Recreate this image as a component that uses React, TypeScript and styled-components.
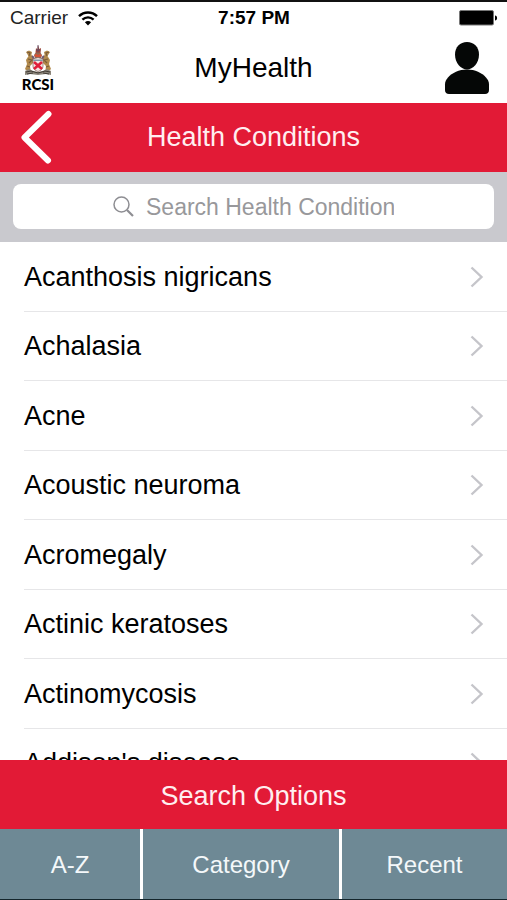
import React from "react";
import styled, { createGlobalStyle } from "styled-components";

const RED = "#e21a36";
const SLATE = "#6e8995";

const GlobalStyle = createGlobalStyle`
  *, *::before, *::after { box-sizing: border-box; }
  body {
    margin: 0;
    background: #fff;
    color: #000;
    font-family: "Liberation Sans", Arial, Helvetica, sans-serif;
  }
  button, input { font-family: inherit; }
`;

const Screen = styled.div`
  display: flex;
  flex-direction: column;
  height: 100vh;
  border-top: 2px solid #111;
  border-bottom: 1px solid #14262c;
`;

const StatusBar = styled.div`
  display: grid;
  grid-template-columns: 1fr auto 1fr;
  align-items: center;
  height: 32px;
  padding: 0 9px 0 10px;
  font-size: 19px;
  line-height: 32px;
  flex: none;
`;

const Carrier = styled.span`
  display: flex;
  align-items: center;
  gap: 10px;
  color: #222;
`;

const Clock = styled.time`
  font-weight: bold;
`;

const Battery = styled.svg`
  justify-self: end;
`;

const AppHeader = styled.header`
  display: grid;
  grid-template-columns: 1fr auto 1fr;
  align-items: center;
  height: 69px;
  padding: 0 17px 2px;
  flex: none;
`;

const AppTitle = styled.h1`
  margin: 0;
  font-size: 28px;
  font-weight: normal;
  line-height: 32px;
`;

const Logo = styled.a`
  justify-self: start;
  display: flex;
  flex-direction: column;
  align-items: center;
  width: 42px;
  color: #000;
  text-decoration: none;
`;

const LogoText = styled.span`
  font-family: Lato, sans-serif;
  font-size: 15px;
  font-weight: 900;
  line-height: 16px;
`;

const IconButton = styled.button`
  display: flex;
  padding: 0;
  border: 0;
  background: none;
  cursor: pointer;
`;

const ProfileButton = styled(IconButton)`
  justify-self: end;
`;

const RedBar = styled.div<{ $footer?: boolean }>`
  display: grid;
  grid-template-columns: 1fr auto 1fr;
  align-items: center;
  height: 69px;
  padding: ${(p) => (p.$footer ? "2px 20px 0" : "0 20px 2px")};
  background: ${RED};
  color: #fff;
  flex: none;
`;

const BarTitle = styled.h2`
  grid-column: 2;
  margin: 0;
  font-size: 27px;
  font-weight: normal;
  line-height: 32px;
  color: #ffeef0;
`;

const SearchBar = styled.form`
  padding: 12px 13px 13px;
  background: #c9c9ce;
  flex: none;
`;

const SearchField = styled.label`
  display: flex;
  align-items: center;
  justify-content: center;
  gap: 12px;
  height: 45px;
  padding: 0 12px;
  border-radius: 8px;
  background: #fff;
`;

const SearchInput = styled.input`
  flex: 0 1 248px;
  min-width: 0;
  padding: 0;
  border: 0;
  outline: 0;
  background: none;
  color: #000;
  font-size: 23px;
  line-height: 28px;
  &::placeholder {
    color: #98989b;
    opacity: 1;
  }
`;

const List = styled.ul`
  flex: 1 1 0;
  min-height: 0;
  margin: 0;
  padding: 0 0 0 24px;
  overflow-y: auto;
  scrollbar-width: none;
  list-style: none;
`;

const Row = styled.li`
  height: 70px;
  border-bottom: 1px solid #e6e6e8;
  &:nth-child(even) { height: 69px; }
`;

const RowLink = styled.a`
  display: flex;
  align-items: center;
  justify-content: space-between;
  height: 100%;
  padding-right: 23px;
  color: #000;
  font-size: 27px;
  line-height: 32px;
  text-decoration: none;
`;

const Tabs = styled.nav`
  display: grid;
  grid-template-columns: 140fr 196fr 165fr;
  gap: 3px;
  height: 70px;
  background: #fff;
  flex: none;
`;

const Tab = styled.button`
  padding: 2px 0 0;
  border: 0;
  background: ${SLATE};
  color: #f4f8fa;
  font-size: 24px;
  line-height: 28px;
  cursor: pointer;
`;

const conditions = [
  "Acanthosis nigricans",
  "Achalasia",
  "Acne",
  "Acoustic neuroma",
  "Acromegaly",
  "Actinic keratoses",
  "Actinomycosis",
  "Addison's disease",
];

const WifiIcon = () => (
  <svg width="20" height="15" viewBox="0 0 20 15" aria-hidden="true">
    <g fill="none" stroke="#000" strokeWidth="2.4">
      <path d="M1 5.2C6 .2 14 .2 19 5.2" />
      <path d="M4.4 8.6c3.2-3 8-3 11.2 0" />
    </g>
    <path d="M6.9 11.2c1.8-1.6 4.4-1.6 6.2 0L10 14.4z" />
  </svg>
);

const BatteryIcon = () => (
  <Battery width="39" height="16" viewBox="0 0 39 16" role="img" aria-label="Battery full">
    <rect x=".5" y=".5" width="34" height="14.5" rx="1.5" stroke="#777" />
    <path d="M36 5.5c2.8.3 2.8 4.7 0 5z" />
  </Battery>
);

const Crest = () => (
  <svg width="28" height="32" viewBox="0 0 28 32" aria-hidden="true">
    <path d="M10 11 12 8l4 0 2 3-1 3h-6z" fill="#8b6b58" />
    <path d="M11.5 8.5 12 4l1.5 1.5L14 1l1.3 4L17 4l-.4 4.8z" fill="#a44735" />
    <path d="M14 1.2v6.6M12 6h4.5" stroke="#5d4b67" strokeWidth="1" />
    <path d="m10 12 2-2.5 2 1.5 2-1.5 2 2.5-2 1h-4z" fill="#d65236" />
    <path d="M2 8 5 6.5 8 8l-.6 3L10 14l-1 5-3 3 .5 4H2l-1-1 2-5-1-4 2.5-4z" fill="#b28a4c" />
    <path d="m26 8-3-1.5L20 8l.6 3L18 14l1 5 3 3-.5 4H26l1-1-2-5 1-4-2.5-4z" fill="#b28a4c" />
    <path d="m3 8 3 1-1 3m20-4-3 1 1 3M4 15l4 1-3 3m19-4-4 1 3 3M3 22l3 1m19-1-3 1" fill="none" stroke="#7a5c38" strokeWidth="1.2" />
    <path d="M8 12c1.5 1 2 2 1.5 4M20 12c-1.5 1-2 2-1.5 4" fill="none" stroke="#6f5970" strokeWidth="2" />
    <path d="m9 15 5-1.5 5 1.5v7c0 3-2 4.500-5 5.500-3-1-5-2.500-5-5.500z" fill="#f3e6e4" stroke="#815b51" strokeWidth=".7" />
    <path d="m10 18 8 7m0-7-8 7" stroke="#e01f3a" strokeWidth="2.6" />
    <path d="M9.3 15.500h9.400v1.500H9.300z" fill="#7e98a5" />
    <path d="m1 27 4-2 4 2 5 1 5-1 4-2 4 2v4l-5-1-8 1-8-1-5 1z" fill="#8b857a" />
    <path d="m2 28 5-1 7 2 7-2 5 1M3 30l6-1m10 0 6 1" fill="none" stroke="#403a34" strokeWidth="1" />
  </svg>
);

const PersonIcon = () => (
  <svg width="46" height="54" viewBox="0 0 46 54" fill="#050706" aria-hidden="true">
    <path d="M23 1c7 0 12 5 12 12.500C35 22 29 28.500 23 28.500S11 22 11 13.500C11 6 16 1 23 1z" />
    <path d="M23 28.500c8 0 15 3.500 19 8 2 2.300 3 4 3 7V49c0 2.500-1.500 4-4 4H5c-2.500 0-4-1.500-4-4v-5.500c0-3 1-4.700 3-7 4-4.500 11-8 19-8z" />
  </svg>
);

const BackIcon = () => (
  <svg width="32" height="54" viewBox="0 0 32 54" aria-hidden="true">
    <path d="M28.500 4 4.500 27.500l23.500 23" fill="none" stroke="#fff" strokeWidth="6" strokeLinecap="round" strokeLinejoin="round" />
  </svg>
);

const SearchIcon = () => (
  <svg width="21" height="21" viewBox="0 0 21 21" fill="none" stroke="#8e8e93" aria-hidden="true">
    <circle cx="8.500" cy="8.500" r="7.500" strokeWidth="1.500" />
    <path d="m14 14 6 6" strokeWidth="2.200" />
  </svg>
);

const Chevron = () => (
  <svg width="14" height="22" viewBox="0 0 14 22" aria-hidden="true">
    <path d="m1.500 1.500 10 9.500-10 9.500" fill="none" stroke="#c5c5ca" strokeWidth="2.400" />
  </svg>
);

export default function App() {
  return (
    <>
      <GlobalStyle />
      <Screen>
        <StatusBar>
          <Carrier>
            Carrier
            <WifiIcon />
          </Carrier>
          <Clock>7:57 PM</Clock>
          <BatteryIcon />
        </StatusBar>
        <AppHeader>
          <Logo href="#home">
            <Crest />
            <LogoText>RCSI</LogoText>
          </Logo>
          <AppTitle>MyHealth</AppTitle>
          <ProfileButton type="button" aria-label="Profile">
            <PersonIcon />
          </ProfileButton>
        </AppHeader>
        <RedBar>
          <IconButton type="button" aria-label="Back">
            <BackIcon />
          </IconButton>
          <BarTitle>Health Conditions</BarTitle>
        </RedBar>
        <SearchBar role="search">
          <SearchField>
            <SearchIcon />
            <SearchInput type="text" aria-label="Search Health Condition" placeholder="Search Health Condition" />
          </SearchField>
        </SearchBar>
        <List>
          {conditions.map((name) => (
            <Row key={name}>
              <RowLink href="#condition">
                {name}
                <Chevron />
              </RowLink>
            </Row>
          ))}
        </List>
        <RedBar $footer>
          <BarTitle>Search Options</BarTitle>
        </RedBar>
        <Tabs aria-label="Search options">
          <Tab type="button">A-Z</Tab>
          <Tab type="button">Category</Tab>
          <Tab type="button">Recent</Tab>
        </Tabs>
      </Screen>
    </>
  );
}
